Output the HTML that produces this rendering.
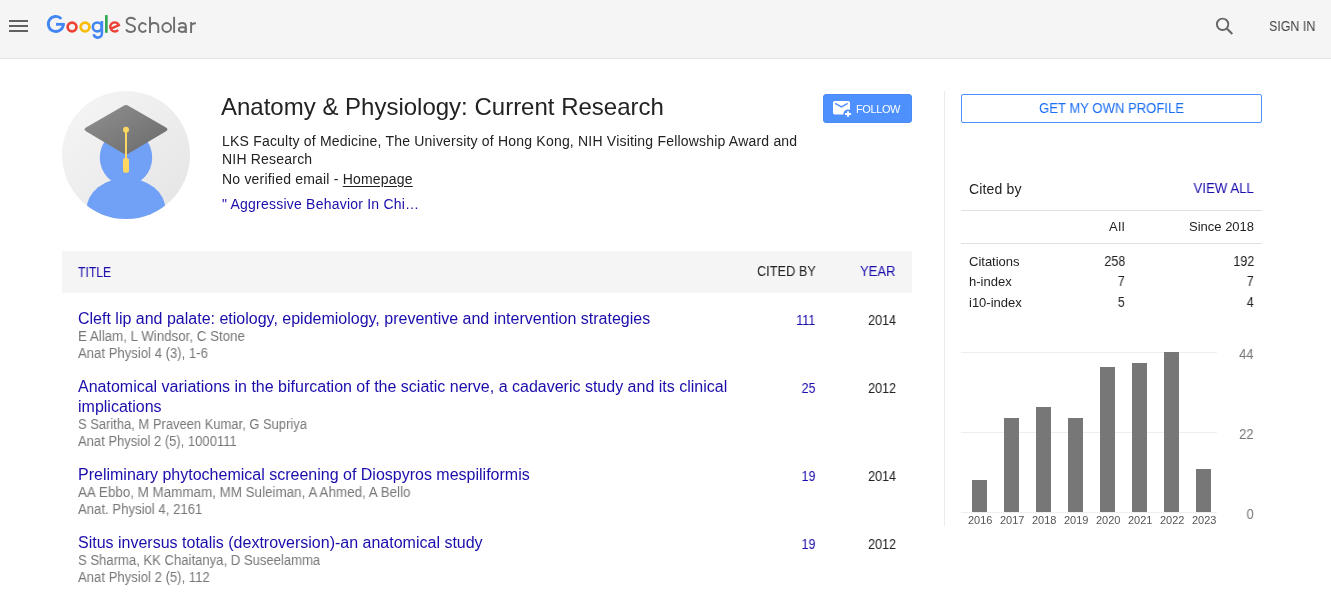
<!DOCTYPE html>
<html><head><meta charset="utf-8">
<style>
*{box-sizing:border-box}
html,body{margin:0;padding:0;width:1331px;height:592px;overflow:hidden;background:#fff;font-family:"Liberation Sans",sans-serif;color:#222}
.a{position:absolute;white-space:nowrap;will-change:transform}
#hdr{position:absolute;left:0;top:0;width:1331px;height:59px;background:#f5f5f5;border-bottom:1px solid #e5e5e5}
.lnk{color:#1a0dab}
</style></head><body>
<div id="hdr">
  <div class="a" style="left:9px;top:20px;width:19px;height:2px;background:#616161"></div>
  <div class="a" style="left:9px;top:25px;width:19px;height:2px;background:#616161"></div>
  <div class="a" style="left:9px;top:30px;width:19px;height:2px;background:#616161"></div>
  <svg class="a" style="left:0;top:0" width="130" height="45" viewBox="0 0 130 45">
    <path d="M61.34 18.91 A7.5 7.5 0 1 0 63.3 23.9" fill="none" stroke="#4285f4" stroke-width="2.8"/>
    <rect x="56" y="22.9" width="8.7" height="2.8" fill="#4285f4"/>
    <circle cx="72.05" cy="26.95" r="4.4" fill="none" stroke="#ea4335" stroke-width="2.7"/>
    <circle cx="85.05" cy="26.95" r="4.4" fill="none" stroke="#fbbc05" stroke-width="2.7"/>
    <circle cx="97.3" cy="26.9" r="4.45" fill="none" stroke="#4285f4" stroke-width="2.6"/>
    <path d="M101.9 21.1 V32.5 A4.2 4.2 0 0 1 93.6 34.2" fill="none" stroke="#4285f4" stroke-width="2.6"/>
    <rect x="105" y="15.1" width="2.7" height="17.7" fill="#34a853"/>
    <path d="M110.47 28.91 L118.94 25.17 A4.55 4.55 0 1 0 118.13 29.99" fill="none" stroke="#ea4335" stroke-width="2.4"/>
  </svg>
  <svg class="a" style="left:0;top:0" width="210" height="45" viewBox="0 0 210 45">
    <g fill="none" stroke="#6e6e6e" stroke-width="1.9">
      <path d="M135.2 20.0 C134.6 18.6 133.0 17.8 130.8 17.8 C128.3 17.8 126.6 19.2 126.6 21.2 C126.6 23.5 128.7 24.3 130.8 24.9 C133.1 25.5 135.05 26.3 135.05 28.5 C135.05 30.6 133.2 31.95 130.8 31.95 C128.6 31.95 126.9 31.0 126.1 29.3"/>
      <path d="M146.12 25.08 A3.9 4.45 0 1 0 146.12 29.92"/>
      <path d="M150 16.85 V32.9 M150 26.8 C150 24.5 151.8 23.05 154.15 23.05 C156.5 23.05 158.3 24.5 158.3 26.8 V32.9"/>
      <ellipse cx="166.7" cy="27.5" rx="4.35" ry="4.45"/>
      <path d="M174.1 16.85 V32.9"/>
      <path d="M178.6 24.6 C179.3 23.6 180.6 23.05 182.1 23.05 C184.3 23.05 185.8 24.3 185.8 26.4 V32.9"/>
      <ellipse cx="182.3" cy="29.6" rx="3.5" ry="2.35"/>
      <path d="M191.1 22.1 V32.9 M191.1 26.6 C191.1 24.2 192.9 23.1 195.9 23.2"/>
    </g>
  </svg>
  <svg class="a" style="left:1210px;top:12px" width="30" height="30" viewBox="0 0 30 30">
    <circle cx="12.6" cy="12.3" r="5.7" fill="none" stroke="#666" stroke-width="1.9"/>
    <path d="M16.6 16.3 L22.3 22" stroke="#666" stroke-width="2.1"/>
  </svg>
  <div class="a" style="left:1269px;top:18px;font-size:14px;line-height:16px;color:#444;transform:scaleX(0.89);transform-origin:0 0">SIGN IN</div>
</div>

<!-- avatar -->
<svg class="a" style="left:62px;top:91px" width="128" height="128" viewBox="0 0 128 128">
  <defs>
    <linearGradient id="ag" x1="0" y1="0" x2="1" y2="1"><stop offset="0" stop-color="#f6f6f6"/><stop offset="1" stop-color="#e4e4e4"/></linearGradient>
    <linearGradient id="cg" x1="0" y1="0" x2="1" y2="1"><stop offset="0" stop-color="#909090"/><stop offset="1" stop-color="#6a6a6a"/></linearGradient>
    <clipPath id="ac"><circle cx="64" cy="64" r="64"/></clipPath>
  </defs>
  <circle cx="64" cy="64" r="64" fill="url(#ag)"/>
  <g clip-path="url(#ac)">
    <ellipse cx="64" cy="66.5" rx="26.2" ry="28" fill="#71a1f6"/>
    <ellipse cx="64" cy="118.5" rx="39.5" ry="31.5" fill="#71a1f6"/>
  </g>
  <path d="M61.3 14.9 Q64 13.2 66.7 14.9 L104 36.4 Q107 38.3 104 40.2 L66.7 62.6 Q64 64.4 61.3 62.6 L24 40.2 Q21 38.3 24 36.4 Z" fill="url(#cg)"/>
  <circle cx="64" cy="38.8" r="3" fill="#fdd663"/>
  <rect x="63" y="39" width="2" height="30" fill="#fdd663"/>
  <rect x="61" y="67.2" width="6" height="14.5" rx="1.8" fill="#fdd663"/>
</svg>

<div class="a" style="left:221px;top:93px;font-size:24px;line-height:28px;color:#222">Anatomy &amp; Physiology: Current Research</div>
<div class="a" style="left:222px;top:132px;font-size:14px;line-height:18px;color:#222;letter-spacing:0.2px">LKS Faculty of Medicine, The University of Hong Kong, NIH Visiting Fellowship Award and</div>
<div class="a" style="left:222px;top:150px;font-size:14px;line-height:18px;color:#222;letter-spacing:0.2px">NIH Research</div>
<div class="a" style="left:222px;top:170px;font-size:14px;line-height:18px;color:#222;letter-spacing:0.2px">No verified email - <span style="text-decoration:underline;text-underline-offset:1.6px">Homepage</span></div>
<div class="a lnk" style="left:222px;top:195px;font-size:14px;line-height:18px;letter-spacing:0.22px">" Aggressive Behavior In Chi…</div>

<div class="a" style="left:823px;top:94px;width:89px;height:29px;background:#4d90fe;border:1px solid #4a8af4;border-radius:3px"></div>
<svg class="a" style="left:830px;top:98px" width="24" height="22" viewBox="0 0 24 22">
  <rect x="3" y="3" width="17" height="13.4" rx="1.6" fill="#fff"/>
  <path d="M5.1 5.4 L11.4 8.9 L17.7 5.4" fill="none" stroke="#4d90fe" stroke-width="1.4"/>
  <circle cx="18" cy="16" r="4.6" fill="#4d90fe"/>
  <rect x="15" y="15" width="6.1" height="2" fill="#fff"/>
  <rect x="17.05" y="13.3" width="2" height="5.5" fill="#fff"/>
</svg>
<div class="a" style="left:856px;top:103px;font-size:11px;line-height:12px;color:#fff;letter-spacing:-0.4px">FOLLOW</div>

<!-- table header -->
<div class="a" style="left:62px;top:251px;width:850px;height:42px;background:#f5f5f5"></div>
<div class="a lnk" style="left:77.5px;top:264px;font-size:14px;line-height:16px;transform:scaleX(0.87);transform-origin:0 0">TITLE</div>
<div class="a" style="left:756.5px;top:263px;font-size:14px;line-height:16px;color:#222;transform:scaleX(0.91);transform-origin:0 0">CITED BY</div>
<div class="a lnk" style="left:860.3px;top:263px;font-size:14px;line-height:16px;transform:scaleX(0.93);transform-origin:0 0">YEAR</div>

<!-- rows -->
<div class="a lnk" style="left:78px;top:309px;font-size:16px;line-height:20px">Cleft lip and palate: etiology, epidemiology, preventive and intervention strategies</div>
<div class="a" style="left:78px;top:328px;font-size:14px;line-height:16px;color:#777;transform:scaleX(0.9520);transform-origin:0 0">E Allam, L Windsor, C Stone</div>
<div class="a" style="left:78px;top:345px;font-size:14px;line-height:16px;color:#777;transform:scaleX(0.9377);transform-origin:0 0">Anat Physiol 4 (3), 1-6</div>
<div class="a lnk" style="right:515.4px;top:311px;font-size:14px;line-height:18px;text-align:right;transform:scaleX(0.9);transform-origin:100% 0">111</div>
<div class="a" style="right:435px;top:311px;font-size:14px;line-height:18px;color:#222;text-align:right;transform:scaleX(0.9);transform-origin:100% 0">2014</div>
<div class="a lnk" style="left:78px;top:377px;font-size:16px;line-height:20px">Anatomical variations in the bifurcation of the sciatic nerve, a cadaveric study and its clinical</div>
<div class="a lnk" style="left:78px;top:397px;font-size:16px;line-height:20px">implications</div>
<div class="a" style="left:78px;top:416px;font-size:14px;line-height:16px;color:#777;transform:scaleX(0.9250);transform-origin:0 0">S Saritha, M Praveen Kumar, G Supriya</div>
<div class="a" style="left:78px;top:433px;font-size:14px;line-height:16px;color:#777;transform:scaleX(0.9294);transform-origin:0 0">Anat Physiol 2 (5), 1000111</div>
<div class="a lnk" style="right:515.4px;top:379px;font-size:14px;line-height:18px;text-align:right;transform:scaleX(0.9);transform-origin:100% 0">25</div>
<div class="a" style="right:435px;top:379px;font-size:14px;line-height:18px;color:#222;text-align:right;transform:scaleX(0.9);transform-origin:100% 0">2012</div>
<div class="a lnk" style="left:78px;top:465px;font-size:16px;line-height:20px">Preliminary phytochemical screening of Diospyros mespiliformis</div>
<div class="a" style="left:78px;top:484px;font-size:14px;line-height:16px;color:#777;transform:scaleX(0.9579);transform-origin:0 0">AA Ebbo, M Mammam, MM Suleiman, A Ahmed, A Bello</div>
<div class="a" style="left:78px;top:501px;font-size:14px;line-height:16px;color:#777;transform:scaleX(0.9394);transform-origin:0 0">Anat. Physiol 4, 2161</div>
<div class="a lnk" style="right:515.4px;top:467px;font-size:14px;line-height:18px;text-align:right;transform:scaleX(0.9);transform-origin:100% 0">19</div>
<div class="a" style="right:435px;top:467px;font-size:14px;line-height:18px;color:#222;text-align:right;transform:scaleX(0.9);transform-origin:100% 0">2014</div>
<div class="a lnk" style="left:78px;top:533px;font-size:16px;line-height:20px">Situs inversus totalis (dextroversion)-an anatomical study</div>
<div class="a" style="left:78px;top:552px;font-size:14px;line-height:16px;color:#777;transform:scaleX(0.9347);transform-origin:0 0">S Sharma, KK Chaitanya, D Suseelamma</div>
<div class="a" style="left:78px;top:569px;font-size:14px;line-height:16px;color:#777;transform:scaleX(0.9371);transform-origin:0 0">Anat Physiol 2 (5), 112</div>
<div class="a lnk" style="right:515.4px;top:535px;font-size:14px;line-height:18px;text-align:right;transform:scaleX(0.9);transform-origin:100% 0">19</div>
<div class="a" style="right:435px;top:535px;font-size:14px;line-height:18px;color:#222;text-align:right;transform:scaleX(0.9);transform-origin:100% 0">2012</div>

<!-- right column -->
<div class="a" style="left:944px;top:91px;width:1px;height:435px;background:#ebebeb"></div>
<div class="a" style="left:961px;top:94px;width:301px;height:29px;border:1px solid #4d90fe;border-radius:2px"></div>
<div class="a" style="left:1039px;top:100px;font-size:14px;line-height:16px;color:#1a6ef2;transform:scaleX(0.935);transform-origin:0 0">GET MY OWN PROFILE</div>

<div class="a" style="left:969px;top:181px;font-size:14px;line-height:16px;color:#222;letter-spacing:0.15px">Cited by</div>
<div class="a lnk" style="right:77px;top:180px;font-size:14px;line-height:16px;transform:scaleX(0.945);transform-origin:100% 0">VIEW ALL</div>
<div class="a" style="left:961px;top:210px;width:301px;height:1px;background:#e0e0e0"></div>
<div class="a" style="right:205.6px;top:220px;font-size:13px;line-height:14px;color:#222;letter-spacing:0.6px">All</div>
<div class="a" style="right:77px;top:220px;font-size:13px;line-height:14px;color:#222">Since 2018</div>
<div class="a" style="left:961px;top:243px;width:301px;height:1px;background:#e0e0e0"></div>
<div class="a" style="left:969px;top:255px;font-size:13px;line-height:14px;color:#222">Citations</div>
<div class="a" style="right:206px;top:252px;font-size:14px;line-height:18px;color:#222;transform:scaleX(0.9);transform-origin:100% 0">258</div>
<div class="a" style="right:77px;top:252px;font-size:14px;line-height:18px;color:#222;transform:scaleX(0.9);transform-origin:100% 0">192</div>
<div class="a" style="left:969px;top:275px;font-size:13px;line-height:14px;color:#222">h-index</div>
<div class="a" style="right:206px;top:272px;font-size:14px;line-height:18px;color:#222;transform:scaleX(0.9);transform-origin:100% 0">7</div>
<div class="a" style="right:77px;top:272px;font-size:14px;line-height:18px;color:#222;transform:scaleX(0.9);transform-origin:100% 0">7</div>
<div class="a" style="left:969px;top:296px;font-size:13px;line-height:14px;color:#222">i10-index</div>
<div class="a" style="right:206px;top:293px;font-size:14px;line-height:18px;color:#222;transform:scaleX(0.9);transform-origin:100% 0">5</div>
<div class="a" style="right:77px;top:293px;font-size:14px;line-height:18px;color:#222;transform:scaleX(0.9);transform-origin:100% 0">4</div>

<!-- chart -->
<div class="a" style="left:961px;top:352px;width:256px;height:1px;background:#eee"></div>
<div class="a" style="left:961px;top:432px;width:256px;height:1px;background:#eee"></div>
<div class="a" style="left:961px;top:512px;width:256px;height:1px;background:#eee"></div>
<div class="a" style="left:972px;top:480px;width:15px;height:32px;background:#777"></div>
<div class="a" style="left:1004px;top:418px;width:15px;height:94px;background:#777"></div>
<div class="a" style="left:1036px;top:407px;width:15px;height:105px;background:#777"></div>
<div class="a" style="left:1068px;top:418px;width:15px;height:94px;background:#777"></div>
<div class="a" style="left:1100px;top:367px;width:15px;height:145px;background:#777"></div>
<div class="a" style="left:1132px;top:363px;width:15px;height:149px;background:#777"></div>
<div class="a" style="left:1164px;top:352px;width:15px;height:160px;background:#777"></div>
<div class="a" style="left:1196px;top:469px;width:15px;height:43px;background:#777"></div>
<div class="a" style="left:968px;top:514px;font-size:11px;line-height:12px;color:#555">2016</div>
<div class="a" style="left:1000px;top:514px;font-size:11px;line-height:12px;color:#555">2017</div>
<div class="a" style="left:1032px;top:514px;font-size:11px;line-height:12px;color:#555">2018</div>
<div class="a" style="left:1064px;top:514px;font-size:11px;line-height:12px;color:#555">2019</div>
<div class="a" style="left:1096px;top:514px;font-size:11px;line-height:12px;color:#555">2020</div>
<div class="a" style="left:1128px;top:514px;font-size:11px;line-height:12px;color:#555">2021</div>
<div class="a" style="left:1160px;top:514px;font-size:11px;line-height:12px;color:#555">2022</div>
<div class="a" style="left:1192px;top:514px;font-size:11px;line-height:12px;color:#555">2023</div>
<div class="a" style="right:77px;top:346px;font-size:14px;line-height:16px;color:#777;transform:scaleX(0.93);transform-origin:100% 0">44</div>
<div class="a" style="right:77px;top:426px;font-size:14px;line-height:16px;color:#777;transform:scaleX(0.93);transform-origin:100% 0">22</div>
<div class="a" style="right:77px;top:506px;font-size:14px;line-height:16px;color:#777;transform:scaleX(0.93);transform-origin:100% 0">0</div>
</body></html>
